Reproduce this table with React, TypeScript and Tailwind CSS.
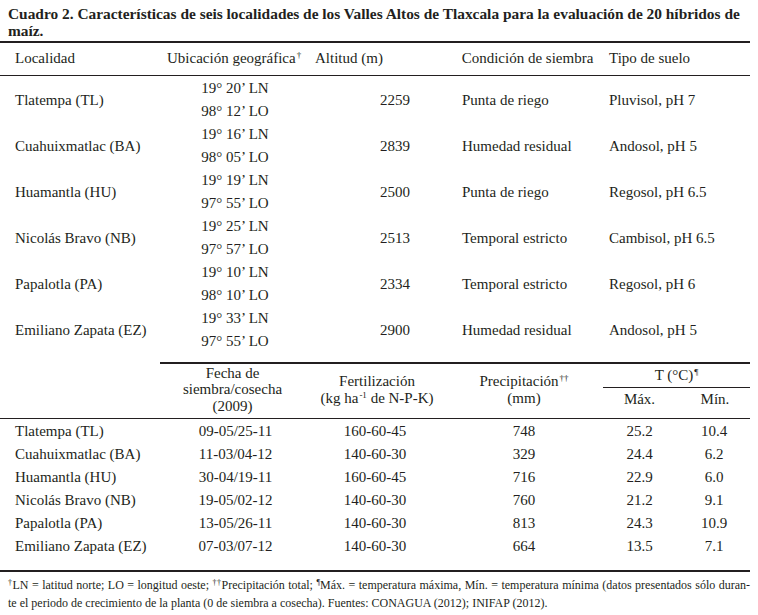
const serif = { fontFamily: '"Liberation Serif", "Times New Roman", serif' };

const sites = [
  { name: 'Tlatempa (TL)', lat: '19° 20’ LN', lon: '98° 12’ LO', alt: '2259', cond: 'Punta de riego', soil: 'Pluvisol, pH 7' },
  { name: 'Cuahuixmatlac (BA)', lat: '19° 16’ LN', lon: '98° 05’ LO', alt: '2839', cond: 'Humedad residual', soil: 'Andosol, pH 5' },
  { name: 'Huamantla (HU)', lat: '19° 19’ LN', lon: '97° 55’ LO', alt: '2500', cond: 'Punta de riego', soil: 'Regosol, pH 6.5' },
  { name: 'Nicolás Bravo (NB)', lat: '19° 25’ LN', lon: '97° 57’ LO', alt: '2513', cond: 'Temporal estricto', soil: 'Cambisol, pH 6.5' },
  { name: 'Papalotla (PA)', lat: '19° 10’ LN', lon: '98° 10’ LO', alt: '2334', cond: 'Temporal estricto', soil: 'Regosol, pH 6' },
  { name: 'Emiliano Zapata (EZ)', lat: '19° 33’ LN', lon: '97° 55’ LO', alt: '2900', cond: 'Humedad residual', soil: 'Andosol, pH 5' },
];

const climate = [
  { name: 'Tlatempa (TL)', date: '09-05/25-11', fert: '160-60-45', rain: '748', max: '25.2', min: '10.4' },
  { name: 'Cuahuixmatlac (BA)', date: '11-03/04-12', fert: '140-60-30', rain: '329', max: '24.4', min: '6.2' },
  { name: 'Huamantla (HU)', date: '30-04/19-11', fert: '160-60-45', rain: '716', max: '22.9', min: '6.0' },
  { name: 'Nicolás Bravo (NB)', date: '19-05/02-12', fert: '140-60-30', rain: '760', max: '21.2', min: '9.1' },
  { name: 'Papalotla (PA)', date: '13-05/26-11', fert: '140-60-30', rain: '813', max: '24.3', min: '10.9' },
  { name: 'Emiliano Zapata (EZ)', date: '07-03/07-12', fert: '140-60-30', rain: '664', max: '13.5', min: '7.1' },
];

const rule = 'h-[1.5px] bg-[#231f20]';
const sup = 'text-[9px] relative -top-[5px] ml-px';
const noteSup = 'text-[8px] relative -top-[4px]';

export default function App() {
  return (
    <div className="w-[758px] h-[615px] bg-white text-[#231f20] overflow-hidden" style={serif}>
      <div className="w-[750px]">
        {/* Title */}
        <div className="pl-2 pt-[5px] pb-[2px] text-[15.4px] leading-[17px] font-bold whitespace-nowrap">
          Cuadro 2. Características de seis localidades de los Valles Altos de Tlaxcala para la evaluación de 20 híbridos de
          <br />
          maíz.
        </div>

        <div className={rule} />

        {/* Upper header */}
        <div className="grid grid-cols-[160px_150px_145px_145px_150px] h-[32px] items-center text-[15px]">
          <div className="pl-[15px]">Localidad</div>
          <div className="pl-[7px]">
            Ubicación geográfica<sup className={sup}>†</sup>
          </div>
          <div className="pl-[5px]">Altitud (m)</div>
          <div className="text-center">Condición de siembra</div>
          <div className="pl-[9px]">Tipo de suelo</div>
        </div>

        <div className={rule} />

        {/* Upper body */}
        <div className="pt-px pb-[9px] text-[15px] leading-[23px]">
          {sites.map((s) => (
            <div key={s.name} className="grid grid-cols-[160px_150px_145px_145px_150px] items-center h-[46px]">
              <div className="pl-[15px]">{s.name}</div>
              <div className="flex flex-col items-center">
                <span>{s.lat}</span>
                <span>{s.lon}</span>
              </div>
              <div className="text-right pr-[45px]">{s.alt}</div>
              <div className="pl-[7px]">{s.cond}</div>
              <div className="pl-[9px]">{s.soil}</div>
            </div>
          ))}
        </div>

        <div className="flex">
          <div className="w-[160px]" />
          <div className={`flex-1 ${rule}`} />
        </div>

        {/* Lower header */}
        <div className="grid grid-cols-[160px_145px_140px_158px_147px] h-[54px] text-[15px] leading-[16.5px]">
          <div />
          <div className="flex flex-col items-center justify-center pb-[2px]">
            <span>Fecha de</span>
            <span>siembra/cosecha</span>
            <span>(2009)</span>
          </div>
          <div className="flex flex-col items-center justify-center pl-[4px] pb-[2px]">
            <span>Fertilización</span>
            <span>
              (kg ha<sup className={sup}>-1</sup> de N-P-K)
            </span>
          </div>
          <div className="flex flex-col items-center justify-center pb-[2px]">
            <span>
              Precipitación<sup className={sup}>††</sup>
            </span>
            <span>(mm)</span>
          </div>
          <div className="flex flex-col">
            <div className="h-[23px] flex items-center justify-center">
              <span>
                T (°C)<sup className={sup}>¶</sup>
              </span>
            </div>
            <div className={rule} />
            <div className="grid grid-cols-[73px_74px] pt-[3px]">
              <div className="text-center">Máx.</div>
              <div className="text-center pl-[4px]">Mín.</div>
            </div>
          </div>
        </div>

        <div className={rule} />

        {/* Lower body */}
        <div className="pt-px pb-[12px] text-[15px] leading-[23px]">
          {climate.map((c) => (
            <div key={c.name} className="grid grid-cols-[160px_145px_140px_158px_73px_74px]">
              <div className="pl-[15px]">{c.name}</div>
              <div className="text-center pl-[6px]">{c.date}</div>
              <div className="text-center">{c.fert}</div>
              <div className="text-center">{c.rain}</div>
              <div className="text-center">{c.max}</div>
              <div className="text-center pl-[2px]">{c.min}</div>
            </div>
          ))}
        </div>

        <div className={rule} />

        {/* Footnote */}
        <div className="pl-2 pt-[4px] text-[12px] leading-[18px]">
          <div className="text-justify [text-align-last:justify]">
            <sup className={noteSup}>†</sup>LN = latitud norte; LO = longitud oeste;{' '}
            <sup className={noteSup}>††</sup>Precipitación total;{' '}
            <sup className={noteSup}>¶</sup>Máx. = temperatura máxima, Mín. = temperatura mínima (datos presentados sólo duran-
          </div>
          <div>te el periodo de crecimiento de la planta (0 de siembra a cosecha). Fuentes: CONAGUA (2012); INIFAP (2012).</div>
        </div>
      </div>
    </div>
  );
}
